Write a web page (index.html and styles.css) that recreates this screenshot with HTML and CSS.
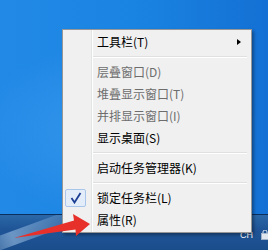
FILE: index.html
```
<!DOCTYPE html>
<html lang="zh">
<head>
<meta charset="utf-8">
<link rel="stylesheet" href="styles.css">
</head>
<body>
<div class="screen">
  <div class="desktop"></div>
  <div class="taskbar">
    <div class="glare"></div>
    <div class="tray">
      <span class="lang">CH</span>
      <svg class="tray-icon" width="8" height="10" viewBox="0 0 8 10"><rect x="0.5" y="3.5" width="7" height="6" fill="#dfe6ee" stroke="#9fb3c8"/><path d="M2 3.5V2a2 2 0 0 1 4 0v1.5" fill="none" stroke="#dfe6ee"/></svg>
    </div>
  </div>

  <div class="menu">
    <div class="item"><span class="label">工具栏(T)</span><span class="sub"></span></div>
    <div class="sep"></div>
    <div class="item disabled"><span class="label">层叠窗口(D)</span></div>
    <div class="item disabled"><span class="label">堆叠显示窗口(T)</span></div>
    <div class="item disabled"><span class="label">并排显示窗口(I)</span></div>
    <div class="item"><span class="label">显示桌面(S)</span></div>
    <div class="sep"></div>
    <div class="item"><span class="label">启动任务管理器(K)</span></div>
    <div class="sep"></div>
    <div class="item"><span class="check"><svg width="12" height="12" viewBox="0 0 12 12"><path d="M1.5 6 L4.5 10.5 L10.5 1" fill="none" stroke="#1b3d93" stroke-width="1.8"/></svg></span><span class="label">锁定任务栏(L)</span></div>
    <div class="item"><span class="label">属性(R)</span></div>
  </div>

  <svg class="arrow" width="100" height="50" viewBox="0 0 100 50">
    <path d="M14 38 L74 20.5 L73 14 L90 24 L76 36 L75.5 29.5 Z" fill="#e8302a"/>
  </svg>
</div>
</body>
</html>
```
FILE: styles.css
```
html, body {
  margin: 0;
  padding: 0;
}
body {
  width: 268px;
  height: 250px;
  overflow: hidden;
  font-family: "Noto Sans CJK SC", "Noto Sans", sans-serif;
}
.screen {
  position: relative;
  width: 268px;
  height: 250px;
  display: flex;
  flex-direction: column;
}
.desktop {
  flex: 1;
  background:
    radial-gradient(ellipse 140px 90px at 120px 130px, rgba(80,170,245,0.5), rgba(80,170,245,0) 100%),
    linear-gradient(90deg, #2289e6 0%, #1a84e2 50%, #1470d4 100%);
}
.taskbar {
  position: relative;
  height: 35px;
  border-top: 1px solid #0c2f5c;
  background: linear-gradient(180deg, #2b67a8 0%, #1f5597 40%, #1a4d8c 100%);
  overflow: hidden;
  display: flex;
  justify-content: flex-end;
  align-items: center;
}
.glare {
  position: absolute;
  left: -30px;
  top: 10px;
  width: 120px;
  height: 14px;
  background: linear-gradient(90deg, rgba(255,255,255,0) 0%, rgba(200,230,255,0.45) 35%, rgba(200,230,255,0) 100%);
  transform: rotate(-20deg);
}
.tray {
  display: flex;
  align-items: center;
  gap: 8px;
  margin-right: -1px;
  margin-top: 4px;
}
.lang {
  color: #fff;
  font-family: "Liberation Sans", sans-serif;
  font-size: 9px;
}
.tray-icon { display: block; }

.menu {
  position: absolute;
  left: 62px;
  top: 29px;
  width: 188px;
  padding: 1px 0;
  border: 1px solid #979797;
  background: #f0f0f0;
  box-shadow: 2px 2px 3px rgba(0,0,0,0.35);
  background-image: linear-gradient(90deg, transparent 28px, #e2e3e3 28px, #e2e3e3 29px, #ffffff 29px, #ffffff 30px, transparent 30px);
}
.item {
  position: relative;
  height: 22px;
  display: flex;
  align-items: center;
  padding-left: 34px;
  font-size: 12px;
  color: #000;
}
.item.disabled { color: #6d6d6d; }
.label { line-height: 22px; }
.sub {
  position: absolute;
  left: 174px;
  top: 8px;
  width: 0;
  height: 0;
  border-top: 3.5px solid transparent;
  border-bottom: 3.5px solid transparent;
  border-left: 4px solid #000;
}
.sep {
  height: 8px;
  margin-left: 30px;
  margin-right: 4px;
  background: linear-gradient(180deg, transparent 3px, #e0e0e0 3px, #e0e0e0 4px, #ffffff 4px, #ffffff 5px, transparent 5px);
}
.check {
  position: absolute;
  left: 2px;
  top: 2px;
  width: 19px;
  height: 16px;
  border: 1px solid #a9c6ea;
  border-radius: 2px;
  background: #e3edf9;
  display: flex;
  align-items: center;
  justify-content: center;
}
.check svg { display: block; }
.arrow {
  position: absolute;
  left: 0;
  top: 200px;
}
```
